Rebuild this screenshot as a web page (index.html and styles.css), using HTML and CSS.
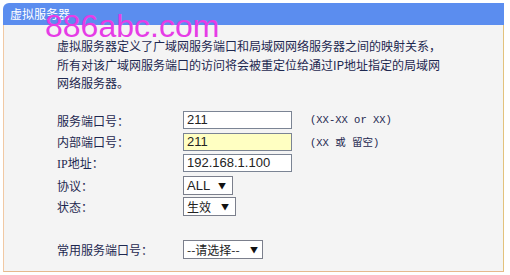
FILE: index.html
```html
<!DOCTYPE html>
<html lang="zh-CN">
<head>
<meta charset="utf-8">
<title>虚拟服务器</title>
<link rel="stylesheet" href="styles.css">
</head>
<body>
<div class="panel">
  <div class="head">虚拟服务器</div>
  <div class="body">
    <p class="intro">虚拟服务器定义了广域网服务端口和局域网网络服务器之间的映射关系，<br>所有对该广域网服务端口的访问将会被重定位给通过IP地址指定的局域网<br>网络服务器。</p>
    <div class="form">
      <div class="row">
        <span class="label">服务端口号：</span>
        <span class="input">211</span>
        <span class="hint">(XX-XX or XX)</span>
      </div>
      <div class="row">
        <span class="label">内部端口号：</span>
        <span class="input yellow">211</span>
        <span class="hint">(XX 或 留空)</span>
      </div>
      <div class="row">
        <span class="label"><span class="lat">IP</span>地址：</span>
        <span class="input">192.168.1.100</span>
      </div>
      <div class="row">
        <span class="label">协议：</span>
        <span class="select w-all"><span class="val">ALL</span><span class="arrow">▼</span></span>
      </div>
      <div class="row">
        <span class="label">状态：</span>
        <span class="select w-state"><span class="val cjk">生效</span><span class="arrow">▼</span></span>
      </div>
      <div class="row row-gap">
        <span class="label">常用服务端口号：</span>
        <span class="select w-common"><span class="val cjk">--请选择--</span><span class="arrow">▼</span></span>
      </div>
    </div>
  </div>
</div>
<div class="watermark">886abc.com</div>
</body>
</html>
```

FILE: styles.css
```css
html, body {
  margin: 0;
  padding: 0;
  background: #ffffff;
}
body {
  position: relative;
  width: 510px;
  height: 275px;
  overflow: hidden;
  font-family: "Noto Sans CJK SC", "Noto Sans", sans-serif;
  color: #1e2850;
}
.panel {
  margin: 3px 0 0 3px;
  width: 501px;
  box-sizing: border-box;
}
.head {
  height: 22px;
  line-height: 22px;
  background: #5b8def;
  color: #ffffff;
  font-size: 12px;
  padding-left: 7px;
  border-top-left-radius: 6px;
}
.body {
  background: #f4f4f4;
  border-left: 1px solid #f1c9a4;
  border-right: 1px solid #e3c27c;
  border-bottom: 1px solid #e6b88e;
  height: 247px;
  box-sizing: border-box;
  padding: 12px 0 0 53px;
}
.intro {
  margin: 0;
  font-size: 12px;
  line-height: 18.5px;
}
.form {
  margin-top: 17px;
  display: flex;
  flex-direction: column;
}
.row {
  display: grid;
  grid-template-columns: 126px 127px auto;
  align-items: center;
  height: 21.6px;
  font-size: 12px;
}
.row-gap {
  margin-top: 21px;
}
.lat {
  font-family: "Liberation Serif", serif;
  font-size: 12px;
}
.input {
  width: 109px;
  height: 18px;
  box-sizing: border-box;
  border: 1px solid #7b8494;
  background: #ffffff;
  font-family: "Liberation Sans", Arial, sans-serif;
  font-size: 13px;
  line-height: 16px;
  padding-left: 3px;
  color: #222222;
}
.input.yellow {
  background: #ffffc2;
}
.hint {
  font-family: "Liberation Mono", "Noto Sans CJK SC", monospace;
  font-size: 10.5px;
  color: #1e2850;
}
.select {
  display: flex;
  align-items: center;
  justify-content: space-between;
  height: 19px;
  box-sizing: border-box;
  border: 1px solid #7b7f8c;
  background: #ffffff;
  padding: 0 6px 0 3px;
  color: #222222;
}
.w-all { width: 50px; }
.w-state { width: 53px; }
.w-common { width: 80px; padding-right: 4px; }
.val {
  font-family: "Liberation Sans", Arial, sans-serif;
  font-size: 13px;
  line-height: 17px;
}
.val.cjk {
  font-family: "Noto Sans CJK SC", sans-serif;
  font-size: 12px;
}
.arrow {
  font-size: 8px;
  line-height: 17px;
  color: #111111;
}
.watermark {
  position: absolute;
  left: 45px;
  top: 10px;
  font-family: "Liberation Sans", Arial, sans-serif;
  font-size: 32px;
  line-height: 32px;
  color: #e63ce6;
}
```
